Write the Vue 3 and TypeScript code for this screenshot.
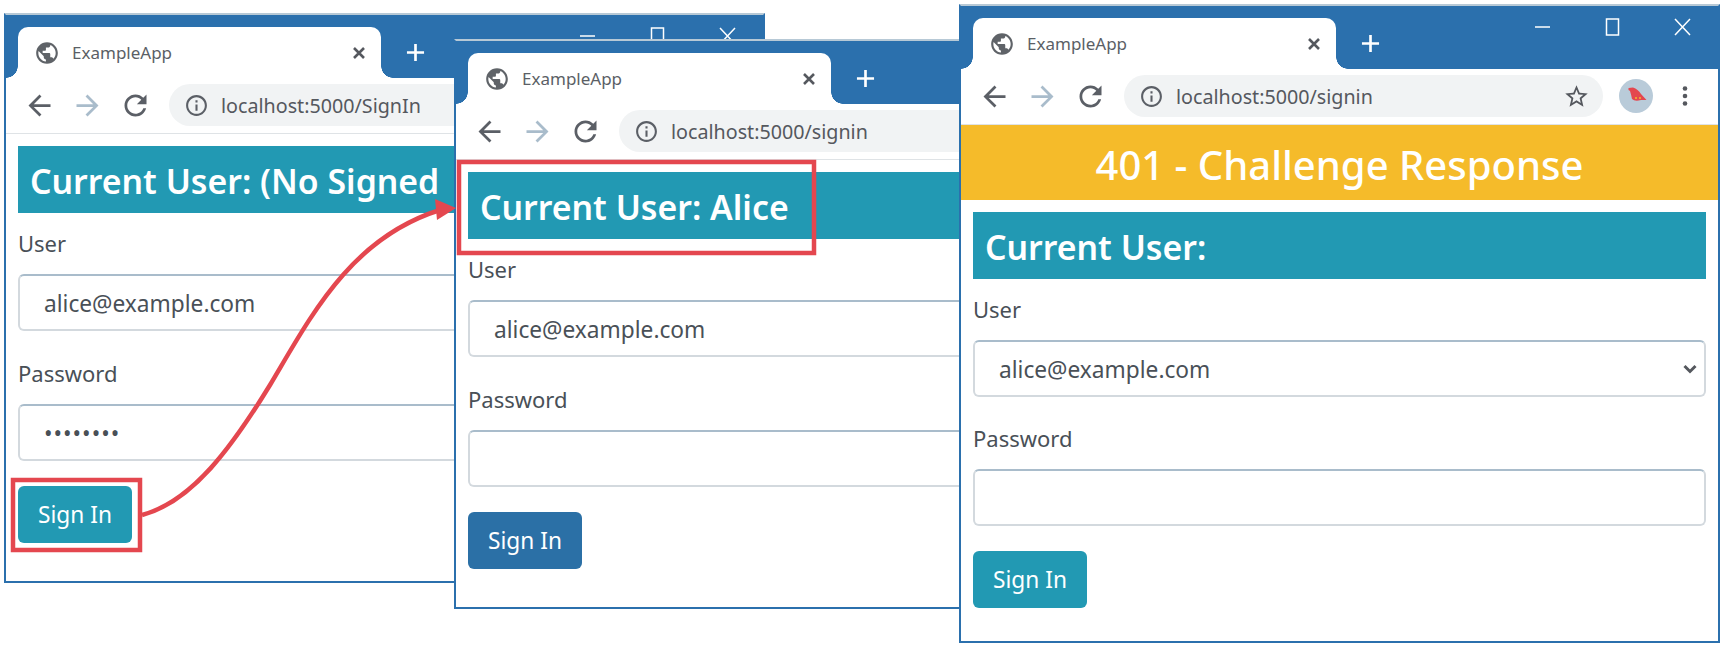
<script setup lang="ts">
interface BrowserWindow {
  id: string
  url: string
  user: string
  banner?: string
  fieldValue: string
  isSelect?: boolean
  password?: string
  buttonClass?: string
  showControls?: boolean
}

const windows: BrowserWindow[] = [
  {
    id: 'first',
    url: 'localhost:5000/SignIn',
    user: '(No Signed',
    fieldValue: 'alice@example.com',
    password: 'mysecret',
    showControls: true,
  },
  {
    id: 'second',
    url: 'localhost:5000/signin',
    user: 'Alice',
    fieldValue: 'alice@example.com',
    buttonClass: 'pressed',
  },
  {
    id: 'third',
    url: 'localhost:5000/signin',
    user: '',
    banner: '401 - Challenge Response',
    fieldValue: 'alice@example.com',
    isSelect: true,
    showControls: true,
  },
]
</script>

<template>
  <div class="desktop">
    <section v-for="win in windows" :key="win.id" class="window" :class="win.id">
      <header class="tabbar">
        <div class="tab">
          <svg class="globe" viewBox="0 0 24 24">
            <path d="M12 2C6.48 2 2 6.48 2 12s4.48 10 10 10 10-4.48 10-10S17.52 2 12 2zm-1 17.93c-3.95-.49-7-3.85-7-7.93 0-.62.08-1.21.21-1.79L9 15v1c0 1.1.9 2 2 2v1.93zm6.9-2.54c-.26-.81-1-1.39-1.9-1.39h-1v-3c0-.55-.45-1-1-1H8v-2h2c.55 0 1-.45 1-1V7h2c1.1 0 2-.9 2-2v-.41c2.93 1.19 5 4.06 5 7.41 0 2.08-.8 3.97-2.1 5.39z" />
          </svg>
          <span class="tab-title">ExampleApp</span>
          <svg class="tab-close" viewBox="0 0 14 14">
            <path d="M2 2l10 10M12 2L2 12" />
          </svg>
        </div>
        <svg class="new-tab" viewBox="0 0 20 20">
          <path d="M10 1v18M1 10h18" />
        </svg>
        <div v-if="win.showControls" class="controls">
          <svg viewBox="0 0 18 18"><path d="M1 9h15" /></svg>
          <svg viewBox="0 0 18 18"><path d="M2.5 1h12v16h-12z" /></svg>
          <svg viewBox="0 0 18 18"><path d="M1 1l15 16M16 1L1 17" /></svg>
        </div>
      </header>

      <nav class="toolbar">
        <svg class="nav-icon" viewBox="0 0 24 24"><path d="M20 11H7.83l5.59-5.59L12 4l-8 8 8 8 1.41-1.41L7.83 13H20v-2z" /></svg>
        <svg class="nav-icon forward" viewBox="0 0 24 24"><path d="M12 4l-1.41 1.41L16.17 11H4v2h12.17l-5.58 5.59L12 20l8-8z" /></svg>
        <svg class="nav-icon" viewBox="0 0 24 24"><path d="M17.65 6.35C16.2 4.9 14.21 4 12 4c-4.42 0-7.99 3.58-7.99 8s3.57 8 7.99 8c3.73 0 6.84-2.55 7.73-6h-2.08c-.82 2.33-3.04 4-5.65 4-3.31 0-6-2.69-6-6s2.69-6 6-6c1.66 0 3.14.69 4.22 1.78L13 11h7V4l-2.35 2.35z" /></svg>
        <div class="omnibox">
          <svg class="info" viewBox="0 0 24 24"><path d="M11 7h2v2h-2zm0 4h2v6h-2zm1-9C6.48 2 2 6.48 2 12s4.48 10 10 10 10-4.48 10-10S17.52 2 12 2zm0 18c-4.41 0-8-3.59-8-8s3.59-8 8-8 8 3.59 8 8-3.59 8-8 8z" /></svg>
          <span class="url">{{ win.url }}</span>
          <svg class="star" viewBox="0 0 24 24"><path d="M22 9.24l-7.19-.62L12 2 9.19 8.63 2 9.24l5.46 4.73L5.82 21 12 17.27 18.18 21l-1.63-7.03L22 9.24zM12 15.4l-3.76 2.27 1-4.28-3.32-2.88 4.38-.38L12 6.1l1.71 4.04 4.38.38-3.32 2.88 1 4.28L12 15.4z" /></svg>
        </div>
        <svg class="avatar" viewBox="0 0 34 34">
          <circle cx="17" cy="17" r="17" fill="#b9cbd9" />
          <path d="M9.5 9L14 8.5Q19 10 22 15L27.5 21L22 21Q16 23 13 20Q12 15 11 12L9.5 11Z" fill="#e4474f" />
          <circle cx="17" cy="19" r="1" fill="#f5bb2a" />
          <circle cx="21" cy="19" r="1" fill="#f5bb2a" />
        </svg>
        <svg class="menu" viewBox="0 0 6 22">
          <circle cx="3" cy="3.5" r="2.3" />
          <circle cx="3" cy="11" r="2.3" />
          <circle cx="3" cy="18.5" r="2.3" />
        </svg>
      </nav>

      <div v-if="win.banner" class="banner">{{ win.banner }}</div>

      <main class="page">
        <h4 class="current-user">Current User: {{ win.user }}</h4>
        <div class="group">
          <label class="field-label">User</label>
          <div v-if="win.isSelect" class="select-wrap">
            <select class="field select-field">
              <option>{{ win.fieldValue }}</option>
            </select>
            <svg class="chevron" viewBox="0 0 14 10"><path d="M1.5 2l5.5 5.5L12.5 2" /></svg>
          </div>
          <input v-else class="field" type="text" :value="win.fieldValue" readonly />
        </div>
        <div class="group">
          <label class="field-label">Password</label>
          <input class="field" type="password" :value="win.password ?? ''" readonly />
        </div>
        <button class="sign-in" :class="win.buttonClass" type="button">Sign In</button>
      </main>
    </section>

    <svg class="callouts" viewBox="0 0 1725 649">
      <rect x="13" y="480" width="127" height="70" />
      <rect x="459" y="162" width="355" height="91" />
      <path d="M142 515C192 502 232 447 270 385C310 318 350 238 440 210" />
      <polygon points="435,199 456,208 437,220" />
    </svg>
  </div>
</template>

<style scoped>
.desktop {
  position: relative;
  width: 1725px;
  height: 649px;
  overflow: hidden;
  background: #fff;
  font-family: "Noto Sans", "Open Sans", sans-serif;
}
.window {
  position: absolute;
  box-sizing: border-box;
  display: flex;
  flex-direction: column;
  width: 761px;
  overflow: hidden;
  background: #fff;
  border: 2px solid #2b70ad;
  border-top-color: #b7c9d6;
}
.first {
  left: 4px;
  top: 13px;
  height: 570px;
}
.second {
  left: 454px;
  top: 39px;
  height: 570px;
}
.third {
  left: 959px;
  top: 4px;
  height: 639px;
}
.tabbar {
  flex: none;
  display: flex;
  align-items: flex-end;
  height: 63px;
  padding-left: 12px;
  background: #2b70ad;
}
.tab {
  position: relative;
  display: flex;
  align-items: center;
  box-sizing: border-box;
  width: 363px;
  height: 51px;
  padding: 0 15px 0 16px;
  background: #fff;
  border-radius: 10px 10px 0 0;
}
.tab::before,
.tab::after {
  content: "";
  position: absolute;
  bottom: 0;
  width: 12px;
  height: 12px;
}
.tab::before {
  left: -12px;
  background: radial-gradient(circle at 0 0, #2b70ad 11.5px, #fff 12px);
}
.tab::after {
  right: -12px;
  background: radial-gradient(circle at 100% 0, #2b70ad 11.5px, #fff 12px);
}
.globe {
  flex: none;
  width: 26px;
  height: 26px;
  fill: #5f6368;
}
.tab-title {
  flex: 1;
  margin-left: 12px;
  font-size: 17px;
  color: #5b5f66;
}
.tab-close {
  flex: none;
  width: 14px;
  height: 14px;
  fill: none;
  stroke: #55585e;
  stroke-width: 2.6;
}
.new-tab {
  flex: none;
  width: 19px;
  height: 19px;
  margin: 0 0 16px 25px;
  fill: none;
  stroke: #fff;
  stroke-width: 2.8;
}
.controls {
  display: flex;
  align-items: center;
  gap: 52px;
  margin: 0 26px 33px auto;
}
.controls svg {
  width: 18px;
  height: 18px;
  fill: none;
  stroke: #fff;
  stroke-width: 1.5;
}
.toolbar {
  flex: none;
  box-sizing: border-box;
  display: flex;
  align-items: center;
  gap: 24px;
  height: 56px;
  padding: 0 30px 1px 21px;
  border-bottom: 1px solid #dfe3e6;
}
.nav-icon {
  flex: none;
  width: 33px;
  height: 33px;
  margin: 0 -4.5px;
  fill: #5b5f66;
}
.nav-icon.forward {
  fill: #a9bccb;
}
.omnibox {
  flex: 1;
  display: flex;
  align-items: center;
  height: 42px;
  padding: 0 13px 0 15px;
  margin: 0 -8px 0 -2px;
  background: #f1f3f4;
  border-radius: 21px;
}
.info {
  flex: none;
  width: 25px;
  height: 25px;
  fill: #5b5f66;
}
.url {
  flex: 1;
  margin-left: 12px;
  font-size: 19.7px;
  color: #55585e;
}
.star {
  flex: none;
  width: 27px;
  height: 27px;
  fill: #55585e;
}
.avatar {
  flex: none;
  width: 34px;
  height: 34px;
}
.menu {
  flex: none;
  width: 6px;
  height: 22px;
  margin-left: 5px;
  fill: #55585e;
}
.banner {
  flex: none;
  height: 75px;
  line-height: 79px;
  text-align: center;
  font-size: 40px;
  font-weight: 500;
  color: #fff;
  background: #f5bb2a;
}
.page {
  padding: 12px;
}
.current-user {
  box-sizing: border-box;
  height: 67px;
  margin: 0 0 16px;
  padding-left: 12px;
  line-height: 70px;
  font-size: 33.8px;
  font-weight: 600;
  white-space: nowrap;
  overflow: hidden;
  color: #fff;
  background: #2299b3;
}
.group {
  margin-bottom: 28px;
}
.third .group {
  margin-bottom: 27px;
}
.field-label {
  display: block;
  height: 30px;
  margin-bottom: 15px;
  line-height: 28px;
  font-size: 22px;
  color: #495057;
}
.field {
  display: block;
  box-sizing: border-box;
  width: 100%;
  height: 57px;
  padding: 2px 24px 0;
  font: inherit;
  font-size: 22.7px;
  color: #495057;
  background: #fff;
  border: 2px solid #d3d9de;
  border-top-color: #a9bccb;
  border-radius: 6px;
  outline: none;
}
.field[type="password"] {
  letter-spacing: 1px;
}
.select-wrap {
  position: relative;
}
.select-field {
  appearance: none;
}
.chevron {
  position: absolute;
  right: 9px;
  top: 24px;
  width: 14px;
  height: 10px;
  fill: none;
  stroke: #55585e;
  stroke-width: 3;
}
.sign-in {
  display: block;
  width: 114px;
  height: 57px;
  margin-top: -3px;
  padding: 0;
  font: inherit;
  font-size: 22.7px;
  color: #fff;
  background: #2299b3;
  border: none;
  border-radius: 6px;
}
.third .sign-in {
  margin-top: -2px;
}
.sign-in.pressed {
  background: #2b70a6;
}
.callouts {
  position: absolute;
  inset: 0;
  width: 1725px;
  height: 649px;
  pointer-events: none;
}
.callouts rect,
.callouts path {
  fill: none;
  stroke: #e4474f;
  stroke-width: 4.5;
}
.callouts polygon {
  fill: #e4474f;
}
</style>
